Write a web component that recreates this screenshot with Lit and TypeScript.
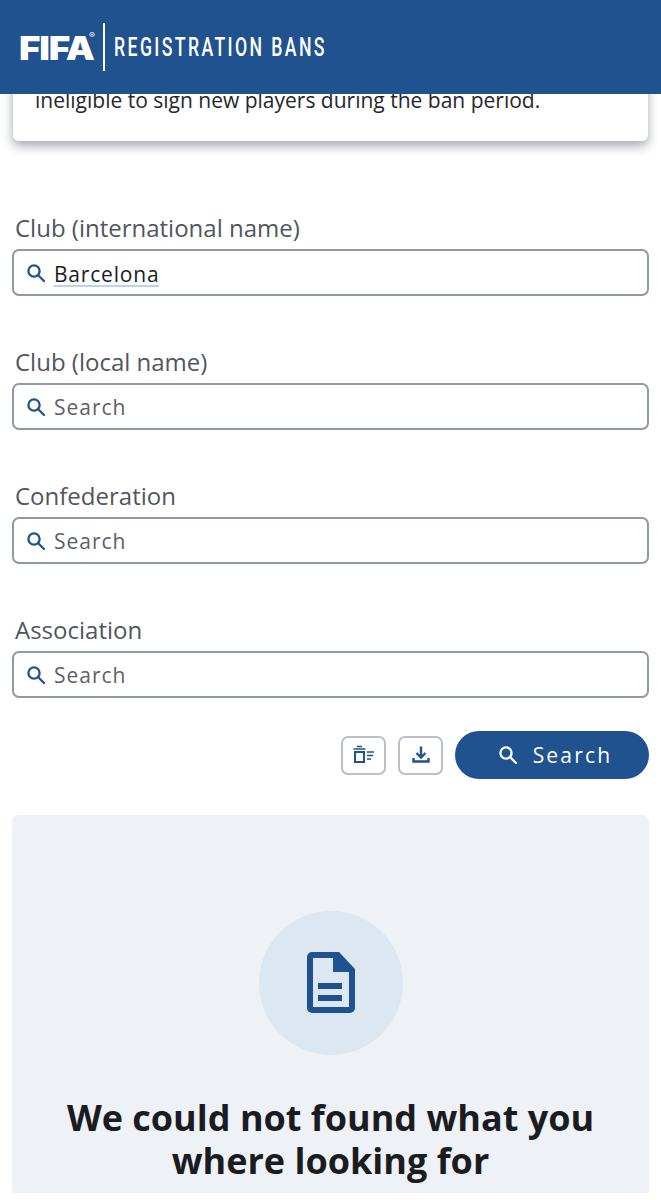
import { LitElement, html, css } from "lit";
import { customElement } from "lit/decorators.js";

const searchIcon = html`<svg class="si" viewBox="0 0 20 20" fill="none" stroke="currentColor" stroke-width="2.3"><circle cx="8" cy="8" r="5.6"/><path d="M12 12l6 6" stroke-linecap="round"/></svg>`;

@customElement("app-root")
export class AppRoot extends LitElement {
  static styles = css`
    :host { display: block; width: 661px; height: 1200px; overflow: hidden; position: relative; background: #fff; font-family: "Open Sans", sans-serif; color: #1a1c1f; }
    header { position: relative; z-index: 2; height: 94px; background: #20528f; display: flex; align-items: center; padding-left: 19px; box-sizing: border-box; color: #fff; }
    .fifa { font-family: "Inter", sans-serif; font-weight: 900; font-size: 33px; letter-spacing: -1px; line-height: 1; width: 76px; position: relative; white-space: nowrap; margin-top: 2px; transform: scaleX(1.11); transform-origin: left center; }
    .reg { position: absolute; font-size: 8px; font-weight: 400; top: -1px; left: 63px; letter-spacing: 0; }
    .div { width: 2px; height: 48px; background: #fff; margin: 0 9px 0 8px; }
    .title { font-family: "Roboto", sans-serif; font-weight: 500; font-size: 26px; line-height: 1; letter-spacing: 3.5px; transform: scaleX(.68); transform-origin: left center; white-space: nowrap; }
    .card { position: relative; z-index: 1; margin: -20px 13px 0 13px; height: 67px; box-sizing: border-box; background: #fff; border-radius: 6px; box-shadow: 0 5px 11px rgba(30,40,60,.4); padding: 13px 22px 0; font-size: 21px; line-height: 27px; color: #24272b; white-space: nowrap; }
    .form { padding: 70px 12px 0 12px; display: flex; flex-direction: column; gap: 49px; }
    label { display: block; font-size: 24px; line-height: 33px; color: #51565e; padding-left: 3px; margin-bottom: 5px; }
    .input { height: 47px; box-sizing: border-box; border: 2px solid #8f99a8; border-radius: 7px; display: flex; align-items: center; padding-left: 12px; gap: 8px; font-size: 21px; letter-spacing: 1px; color: #5c6168; }
    .si { width: 20px; height: 20px; color: #20528f; flex: none; }
    .val { color: #1a1c1f; border-bottom: 2px solid #b9d3ec; line-height: 24px; height: 23px; margin-top: 3px; letter-spacing: .8px; }
    .ph { margin-top: 1px; }
    .actions { display: flex; justify-content: flex-end; align-items: center; gap: 12px; padding: 33px 12px 0 0; }
    .ib { width: 45px; height: 39px; box-sizing: border-box; border: 2px solid #bcc1c9; border-radius: 7px; display: flex; align-items: center; justify-content: center; color: #20528f; }
    .ib svg { width: 24px; height: 24px; }
    .go { width: 194px; height: 48px; border-radius: 24px; background: #20528f; color: #fff; display: flex; align-items: center; justify-content: center; gap: 15px; font-size: 21px; font-weight: 500; letter-spacing: 2.2px; padding-left: 6px; box-sizing: border-box; }
    .go .si { color: #fff; }
    .empty { margin: 36px 12px 0; height: 378px; background: #eef1f6; border-radius: 6px 6px 0 0; display: flex; flex-direction: column; align-items: center; box-sizing: border-box; padding-top: 96px; }
    .circle { width: 144px; height: 144px; border-radius: 50%; background: #dde7f1; display: flex; align-items: center; justify-content: center; color: #20528f; }
    .circle svg { width: 50px; height: 62px; }
    h2 { margin: 41px 0 0; font-size: 36px; line-height: 43px; font-weight: 700; text-align: center; color: #1a1c1f; }
  `;

  private field(name: string, value?: string) {
    return html`<div>
      <label>${name}</label>
      <div class="input">${searchIcon}${value ? html`<span class="val">${value}</span>` : html`<span class="ph">Search</span>`}</div>
    </div>`;
  }

  render() {
    return html`
      <header>
        <div class="fifa">FIFA<span class="reg">®</span></div>
        <div class="div"></div>
        <div class="title">REGISTRATION BANS</div>
      </header>
      <div class="card">ineligible to sign new players during the ban period.</div>
      <div class="form">
        ${this.field("Club (international name)", "Barcelona")}
        ${this.field("Club (local name)")}
        ${this.field("Confederation")}
        ${this.field("Association")}
      </div>
      <div class="actions">
        <div class="ib"><svg viewBox="0 0 24 24" fill="none" stroke="currentColor" stroke-width="2"><path d="M5 3.500h5" stroke-width="1.500"/><path d="M1.500 6h12" stroke-width="1.500"/><path d="M3 9h9v10H3z"/><path d="M15 9h7M15 12.500h6M15 16h4" stroke-width="1.700"/></svg></div>
        <div class="ib"><svg viewBox="0 0 24 24" fill="none" stroke="currentColor" stroke-width="2.4"><path d="M12 3.500v10.500M7.500 10l4.500 4.500 4.500-4.500"/><path d="M4.500 15v3.500h15V15"/></svg></div>
        <div class="go">${searchIcon}<span>Search</span></div>
      </div>
      <div class="empty">
        <div class="circle"><svg viewBox="0 0 50 62"><path fill="currentColor" fill-rule="evenodd" d="M6 0h27l16 17v39a5 5 0 0 1-5 5H6a5 5 0 0 1-5-5V5a5 5 0 0 1 5-5zM7 6v49h36V20H27V6z"/><path fill="currentColor" d="M12 31h24v6H12zM12 43h24v6H12z"/></svg></div>
        <h2>We could not found what you<br>where looking for</h2>
      </div>
    `;
  }
}
